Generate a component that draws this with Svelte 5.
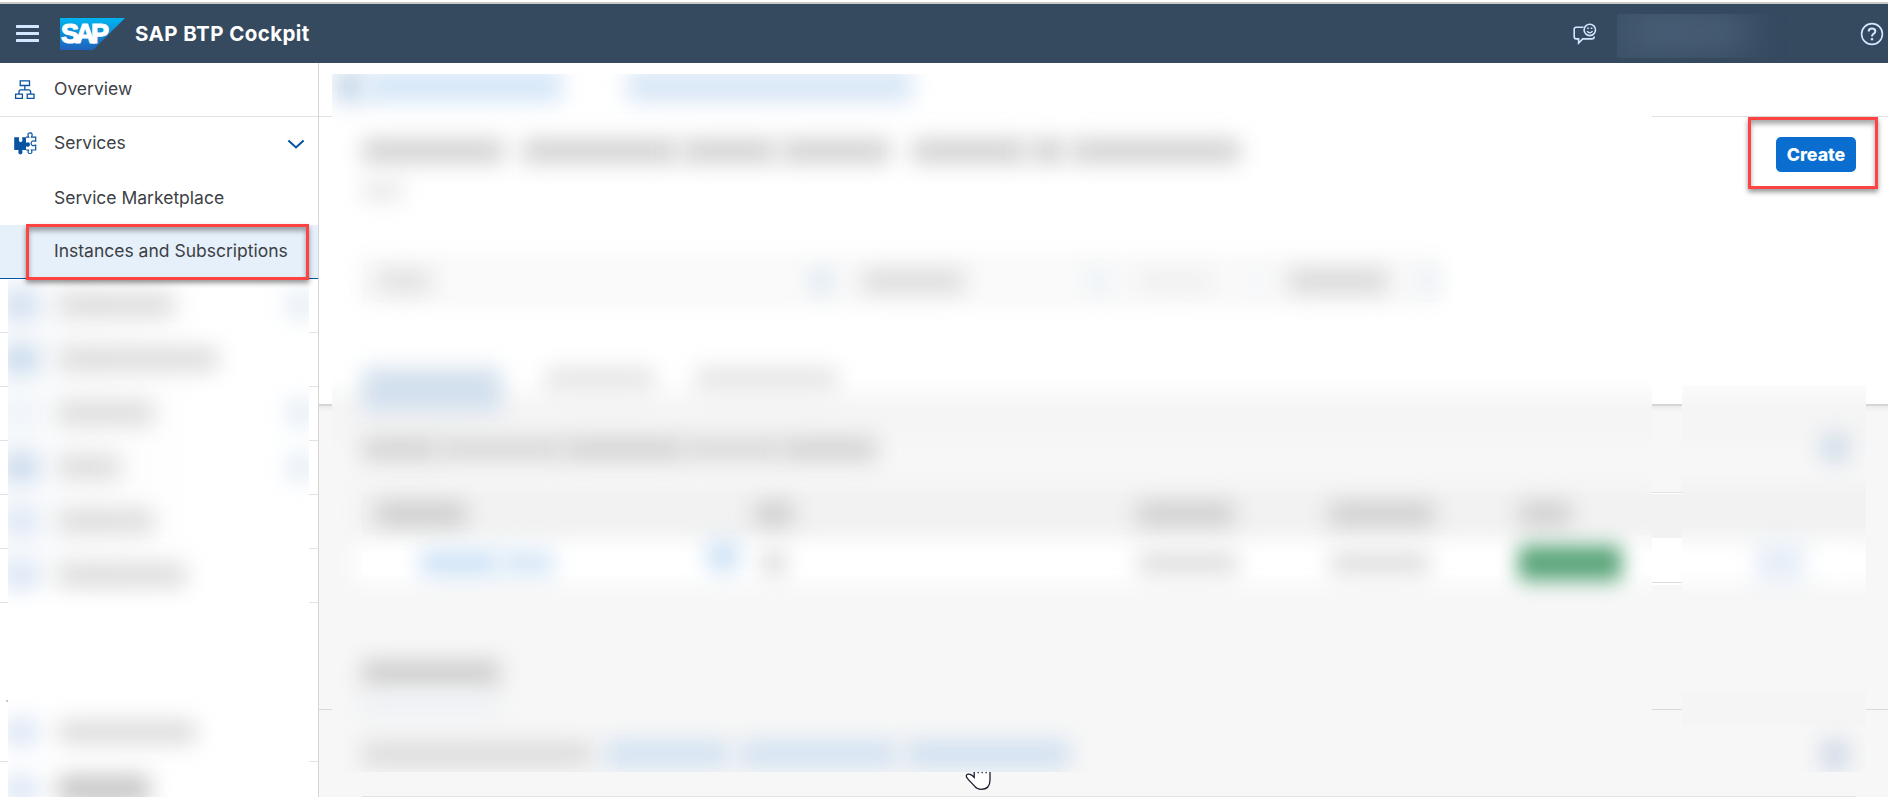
<script>
  const hidden = [
    { w: 116, icon: '#cfddf0', arrow: true },
    { w: 160, icon: '#c6d8ec' },
    { w: 96, icon: '#edf3f9', arrow: true },
    { w: 62, icon: '#c8d8ec', arrow: true },
    { w: 96, icon: '#dde6f5' },
    { w: 128, icon: '#dae5f5' }
  ];

  // Each bar: [gap before, width, height, colour]
  const crumbs = [[0, 32, 32, '#c6d9ea'], [0, 196, 32, '#d5e6f7'], [65, 285, 32, '#d7e6f6']];
  const title = [[0, 142, 24, '#d0d1d0'], [18, 156, 24, '#d0d1d0'], [4, 94, 24, '#d0d1d0'], [5, 109, 24, '#d0d1d0'], [22, 114, 24, '#d0d1d0'], [4, 35, 24, '#d0d1d0'], [6, 169, 24, '#d0d1d0']];
  const filters = [[14, 55, 20, '#dcdddc'], [381, 20, 22, '#d6e4f2'], [30, 102, 20, '#d7d8d7'], [123, 22, 22, '#eaf1f7'], [29, 74, 16, '#ececec'], [37, 16, 18, '#f1f5f9'], [23, 100, 22, '#d5d6d5'], [28, 22, 22, '#eaf0f7']];
  const tabs = [[0, 140, 44, '#d2dfed'], [43, 110, 22, '#e3e3e3'], [40, 143, 22, '#e3e3e3']];
  const heads = [[14, 90, 22, '#c9cac9'], [289, 38, 22, '#c9cac9'], [344, 97, 22, '#cbcccb'], [95, 105, 22, '#cbcccb'], [85, 52, 22, '#cbcccb']];
  const links = [[0, 230, 24, '#dadbda'], [13, 124, 28, '#d3e2f1'], [11, 157, 28, '#d3e2f1'], [9, 164, 28, '#d1e0f0']];
</script>

{#snippet bars(list)}
  {#each list as [gap, w, h, c]}
    <i class="bar" style="margin-left:{gap}px;width:{w}px;height:{h}px;background:{c}"></i>
  {/each}
{/snippet}

<div class="page">
  <header>
    <svg class="burger" width="23" height="17" viewBox="0 0 23 17"><path d="M1 1.5h21M1 8.5h21M1 15.5h21" stroke="#d1e8ff" stroke-width="3" stroke-linecap="round" /></svg>
    <svg class="logo" width="66" height="32" viewBox="0 0 66 32">
      <defs><linearGradient id="sap" x1="0" y1="0" x2="0" y2="1"><stop offset="0" stop-color="#00b5f0" /><stop offset="1" stop-color="#1f61bd" /></linearGradient></defs>
      <path d="M0 0h65L33 32H0z" fill="url(#sap)" />
      <text x="1" y="25" textLength="48" lengthAdjust="spacing">SAP</text>
    </svg>
    <h1>SAP BTP Cockpit</h1>
    <svg class="feedback" width="24" height="22" viewBox="0 0 24 22" fill="none" stroke="#d1e8ff" stroke-width="1.6">
      <path d="M10.5 4.2H3.2Q1.2 4.2 1.2 6.2V13.5Q1.2 15.9 3.2 15.9H5.6V20L9.8 15.9H18.8Q21.2 15.9 21.2 13.4" />
      <circle cx="16.8" cy="6.9" r="5.7" />
      <path d="M14 8.1Q16.8 11.4 19.6 8.1M14.2 5.2h1.6M17.8 5.2h1.6" stroke-width="1.4" />
    </svg>
    <div class="user"><i></i></div>
    <svg class="help" width="24" height="24" viewBox="0 0 24 24" fill="none" stroke="#d1e8ff" stroke-width="1.6">
      <circle cx="12" cy="12" r="10.4" />
      <path d="M8.7 9.5Q8.7 6.6 12 6.6Q15.3 6.6 15.3 9.3Q15.3 10.8 13.5 11.9Q12 12.8 12 14.4" stroke-width="2" />
      <path d="M12 16.1v2.2" stroke-width="2.4" />
    </svg>
  </header>

  <div class="body">
    <nav>
      <div class="item">
        <svg class="tree" width="22" height="20" viewBox="0 0 22 20" fill="none" stroke="#0854a0" stroke-width="1.3">
          <path d="M6.2.9h9.3v4.6H6.2zM1.6 14.2h6.8v4.2H1.6zM13.2 14.2H20v4.2h-6.8zM10.8 5.5v4.3M5 14.2v-2.4Q5 9.8 7 9.8h7.6q2 0 2 2v2.4" />
        </svg>
        <span>Overview</span>
      </div>
      <div class="item plain">
        <svg class="puzzle" width="23" height="23" viewBox="0 0 23 23">
          <path d="M.2 5.2h5q-1.2 4.8 1.5 4.8T8 5.2h4v5.5q4-1.3 4 1.9t-4 1.6V18H8.2q1 4.4-1.8 4.4T4.6 18H.2z" fill="#0854a0" />
          <path d="M12 5.2h2.7Q12.6.9 16 .9t1.5 4.3h4.2v4q-4.6-1-4.6 2.1t4.6 1.9V18h-4.3q1.5 3.5-1.4 3.5T14.5 18H12" fill="none" stroke="#0854a0" stroke-width="1.2" />
        </svg>
        <span>Services</span>
        <svg class="chev" width="18" height="10" viewBox="0 0 18 10"><path d="M1.4 1.4 9 8.4l7.6-7" fill="none" stroke="#0854a0" stroke-width="2.1" /></svg>
      </div>
      <div class="item plain sub market"><span>Service Marketplace</span></div>
      <div class="item sub active"><span>Instances and Subscriptions</span></div>
      {#each hidden as _}<div class="item"></div>{/each}
      <div class="space"><b></b></div>
      <div class="item"></div>
      <div class="veil side">
        {#each hidden as row}
          <div class="row">
            <i class="bar ico" style="background:{row.icon}"></i>
            <i class="bar txt" style="width:{row.w}px"></i>
            {#if row.arrow}<i class="bar arrow"></i>{/if}
          </div>
        {/each}
        <div class="row lower"><i class="bar ico"></i><i class="bar txt" style="width:138px"></i></div>
        <div class="row last"><i class="bar ico"></i><i class="bar txt dark" style="width:92px"></i></div>
      </div>
      <div class="mark mark-nav"></div>
    </nav>

    <main>
      <div class="crumbline"></div>
      <div class="top"><button>Create</button></div>
      <div class="sheet">
        <div class="thead"></div>
        <div class="trow"></div>
        <div class="divider"></div>
        <div class="baseline"></div>
      </div>

      <div class="veil big">
        <div class="line crumbs">{@render bars(crumbs)}</div>
        <div class="line title">{@render bars(title)}</div>
        <div class="line subtitle">{@render bars([[0, 40, 18, '#e5e5e5']])}</div>
        <div class="line filters">{@render bars(filters)}</div>
        <div class="line tabs">{@render bars(tabs)}</div>
        <div class="line note">{@render bars([[0, 76, 24, '#d2d3d2'], [0, 126, 22, '#d5d6d5'], [0, 120, 24, '#d2d3d2'], [0, 98, 22, '#d6d7d6'], [0, 95, 24, '#d2d3d2']])}</div>
        <div class="line heads">{@render bars(heads)}</div>
        <div class="line cells">
          {@render bars([[58, 78, 26, '#cde2f5'], [2, 54, 26, '#d6e6f6']])}
          <i class="bar launch"></i>
          {@render bars([[24, 24, 22, '#d8d8d8'], [352, 100, 22, '#dddddd'], [92, 100, 22, '#dddddd']])}
          <i class="bar status"></i>
        </div>
        <div class="line section">{@render bars([[0, 138, 26, '#cdcecd']])}</div>
        <div class="line under">{@render bars([[0, 136, 16, '#ebeff5']])}</div>
        <div class="line links">{@render bars(links)}</div>
      </div>

      <div class="veil small">
        <div class="line tool">{@render bars([[140, 26, 28, '#cdd9e8']])}</div>
        <div class="line act">{@render bars([[74, 48, 42, '#e6eef7'], [20, 26, 30, '#ffffff']])}</div>
        <div class="line tool end">{@render bars([[140, 26, 30, '#cdd7e6']])}</div>
      </div>

      <div class="mark mark-create"></div>
      <svg class="hand" width="28" height="20" viewBox="0 0 28 20">
        <path d="M9.2 0V5.3L7 3.2Q2.4.9 1.3 3.5 1 5 3.2 7.4L9.8 14.4Q12.2 17.3 16 17.4 25 17.4 25 8V0" fill="#fff" />
        <path d="M9.2 0V5.5L7 3.3Q2.4 1 1.3 3.6 1 5 3.2 7.4L9.8 14.4Q12.2 17.3 16 17.4 25 17.4 25 8V0M13.2 0v1.3M17.2 0v1.3M21.2 0v1.3" fill="none" stroke="#1c1c30" stroke-width="1.3" />
      </svg>
    </main>
  </div>
</div>

<style>
  :global(body) { margin: 0; overflow: hidden; }
  .page { width: 1888px; height: 797px; overflow: hidden; box-sizing: border-box; padding-top: 2px; background: #fff; font-family: Inter, Roboto, "Liberation Sans", sans-serif; color: #3c4045; display: flex; flex-direction: column; }
  svg { display: block; flex: none; }
  header { height: 59px; flex: none; border-top: 2px solid #c9cbc9; background: #354a5f; display: flex; align-items: center; padding: 0 4px 0 16px; }
  .logo { margin-left: 21px; }
  .logo text { font: bold 27px "Liberation Sans", Arial, sans-serif; fill: #fff; stroke: #fff; stroke-width: 1.2px; }
  h1 { margin: 0 0 0 9px; font-size: 20.5px; font-weight: 700; line-height: 30px; letter-spacing: .42px; color: #fff; white-space: nowrap; }
  .feedback { margin-left: auto; }
  .user { width: 200px; height: 44px; margin: 5px 43px 0 20px; overflow: hidden; display: flex; align-items: center; background: linear-gradient(90deg, #3b5167, #354a5f 170px); }
  .user i { width: 118px; height: 26px; margin: -8px 0 0 12px; background: #50677f; filter: blur(18px); }
  .body { flex: 1; min-height: 0; display: flex; }
  nav { width: 318px; flex: none; border-right: 1px solid #d5d5d5; position: relative; overflow: hidden; }
  .item { height: 54px; box-sizing: border-box; border-bottom: 1px solid #e2e2e2; display: flex; align-items: center; font-size: 17.5px; }
  .item span { white-space: nowrap; padding-bottom: 2px; }
  .market span { padding-bottom: 0; }
  .plain { border-color: transparent; }
  .tree { margin: 0 18px 0 14px; }
  .puzzle { margin: 0 17px 0 14px; }
  .chev { margin: 0 13px 0 auto; }
  .sub { padding-left: 54px; }
  .active { background: #e5f0fa; border-color: #0854a0; }
  .space { height: 105px; padding: 97px 0 0 6px; box-sizing: border-box; }
  .space b { display: block; width: 3px; height: 2px; background: #c8c8c8; }
  .veil { position: absolute; overflow: hidden; }
  .bar { display: block; flex: none; filter: blur(11px); border-radius: 3px; }
  .side { left: 8px; top: 217px; width: 301px; bottom: 0; background: linear-gradient(90deg, #f9fbfd 0, #fcfcfc 80px, #fff 200px) 0 0 / 100% 320px no-repeat #fff; }
  .side::before { content: ""; position: absolute; left: 0; top: 290px; width: 100%; height: 40px; background: linear-gradient(transparent, #fff 28px); }
  .row { height: 54px; display: flex; align-items: center; }
  .row:first-of-type { margin-top: -2px; }
  .ico { width: 34px; height: 28px; margin-left: -4px; background: #dce6f5; }
  .txt { height: 24px; margin-left: 20px; background: #dbdcdb; }
  .dark { background: #c5c6c5; height: 28px; }
  .arrow { width: 30px; height: 28px; margin-left: auto; margin-right: -7px; background: #e6eef6; }
  .lower { margin-top: 103px; }
  .last { margin-top: 3px; }
  main { flex: 1; min-width: 0; position: relative; display: flex; flex-direction: column; }
  .crumbline { height: 53px; flex: none; border-bottom: 1px solid #e2e2e2; }
  .top { height: 287px; flex: none; display: flex; justify-content: flex-end; align-items: flex-start; padding: 20px 32px 0 0; box-sizing: border-box; }
  button { width: 80px; height: 35px; border: 0; padding: 0; border-radius: 5px; background: #0a6ed1; color: #fff; font: 800 17.8px Inter, Roboto, sans-serif; letter-spacing: -.05px; }
  .sheet { flex: 1; border-top: 2px solid #d6d6d6; background: linear-gradient(#ebebeb, #f7f7f7 6px); display: flex; flex-direction: column; }
  .thead { margin: 86px 31px 0 43px; height: 45px; border-top: 1px solid #e0e0e0; background: #f2f2f2; box-shadow: inset 0 1px #fff; }
  .trow { margin: 0 31px 0 43px; height: 44px; border-bottom: 1px solid #dcdcdc; background: #fff; box-shadow: 0 2px #fff; }
  .divider { height: 1px; margin-top: 126px; background: #d8dadb; }
  .baseline { height: 1px; margin: 86px 32px 0 43px; background: #e2e2e2; }
  .line { display: flex; align-items: center; flex: none; }
  .big { left: 13px; top: 11px; width: 1320px; height: 698px; display: flex; flex-direction: column; background: linear-gradient(#fff 0 305px, #f5f5f5 335px 350px, #f7f7f7 380px); }
  .big > .line { margin-left: 30px; }
  .big > .crumbs { height: 28px; margin: -2px 0 0 2px; }
  .title { height: 30px; margin-top: 36px; }
  .subtitle { height: 20px; margin-top: 15px; }
  .filters { height: 42px; margin-top: 59px; background: #fafafa; box-shadow: 0 0 24px 7px #fafafa; margin-right: 215px; }
  .tabs { height: 40px; margin-top: 66px; align-items: flex-start; }
  .note { height: 26px; margin-top: 28px; }
  .heads { height: 42px; margin-top: 31px; background: #f2f2f2; box-shadow: 0 -2px 24px 4px #f2f2f2; }
  .cells { height: 18px; padding: 3px 0; margin-top: 16px; background: #fff; box-shadow: 0 0 24px 9px #fff; }
  .launch { width: 30px; height: 30px; margin: -14px 0 0 154px; background: #c9e0f4; }
  .status { width: 104px; height: 36px; margin-left: 88px; background: #5ba67b; border-radius: 6px; filter: blur(10px); }
  .section { height: 30px; margin-top: 83px; }
  .under { height: 20px; margin-top: 8px; }
  .links { height: 30px; margin-top: 23px; }
  .small { left: 1363px; top: 322px; width: 184px; height: 387px; display: flex; flex-direction: column; background: linear-gradient(#fcfcfc 0, #f5f5f5 22px 48px, #f7f7f7 70px 88px, #f2f2f2 110px 140px, #fff 170px 185px, #f7f7f7 212px 304px, #f5f5f5 308px 340px, #f7f7f7 342px); }
  .tool { height: 30px; margin-top: 48px; }
  .act { height: 42px; margin-top: 78px; }
  .end { margin-top: 157px; }
  .mark { position: absolute; box-sizing: border-box; border: 3px solid #ff4343; box-shadow: 0 3px 5px rgba(0,0,0,.42), inset 0 4px 5px rgba(0,0,0,.34); }
  .mark-nav { left: 26px; top: 161px; width: 283px; height: 56px; }
  .mark-create { left: 1429px; top: 54px; width: 130px; height: 72px; }
  .hand { position: absolute; left: 646px; top: 709px; }
</style>
